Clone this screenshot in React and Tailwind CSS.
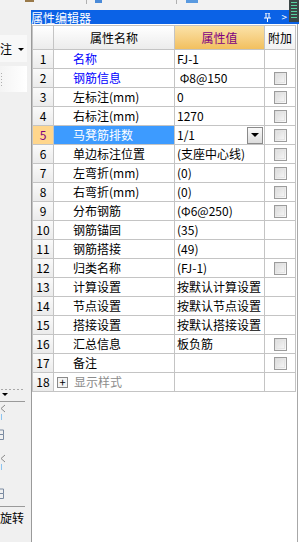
import React from 'react';

const ROWS = [
  { n: 1, name: '名称', value: 'FJ-1', blue: true },
  { n: 2, name: '钢筋信息', value: ' Φ8@150', blue: true, cb: true },
  { n: 3, name: '左标注(mm)', value: '0', cb: true },
  { n: 4, name: '右标注(mm)', value: '1270', cb: true },
  { n: 5, name: '马凳筋排数', value: '1/1', cb: true, selected: true },
  { n: 6, name: '单边标注位置', value: '(支座中心线)', cb: true },
  { n: 7, name: '左弯折(mm)', value: '(0)', cb: true },
  { n: 8, name: '右弯折(mm)', value: '(0)', cb: true },
  { n: 9, name: '分布钢筋', value: '(Φ6@250)', cb: true },
  { n: 10, name: '钢筋锚固', value: '(35)' },
  { n: 11, name: '钢筋搭接', value: '(49)' },
  { n: 12, name: '归类名称', value: '(FJ-1)', cb: true },
  { n: 13, name: '计算设置', value: '按默认计算设置' },
  { n: 14, name: '节点设置', value: '按默认节点设置' },
  { n: 15, name: '搭接设置', value: '按默认搭接设置' },
  { n: 16, name: '汇总信息', value: '板负筋', cb: true },
  { n: 17, name: '备注', value: '', cb: true },
  { n: 18, name: '显示样式', value: '', group: true },
];

function Check() {
  return (
    <div className="w-[13px] h-[13px] border border-[#9c9c9c] bg-gradient-to-br from-[#d8d8d8] to-[#fbfbfb] p-[1px]">
      <div className="w-full h-full border border-[#e4e4e4]" />
    </div>
  );
}

function Row({ r }) {
  const cell = 'h-[19px] border-r border-b border-[#c4c4c4] flex items-center';
  return (
    <>
      <div
        className={`${cell} justify-center ${
          r.selected
            ? 'bg-[#ffd68c] text-[#800080]'
            : 'bg-gradient-to-b from-[#fafafa] to-[#ebebeb] text-black'
        }`}
      >
        {r.n}
      </div>
      <div
        className={`${cell} ${r.group ? 'pl-[3px]' : 'pl-[19px]'} ${
          r.selected ? 'bg-[#3d9bff] text-white' : r.blue ? 'text-[#0000ff]' : 'text-black'
        }`}
      >
        {r.group && (
          <div className="w-[11px] h-[11px] border border-[#8a8a8a] bg-[#f4f4f4] flex items-center justify-center mr-[6px] text-[11px] leading-none text-black">
            +
          </div>
        )}
        <span className={r.group ? 'text-[#8c8c8c]' : ''}>{r.name}</span>
      </div>
      <div className={`${cell} pl-[2px] pr-[1px] whitespace-pre justify-between`}>
        <span>{r.value}</span>
        {r.selected && (
          <div className="w-[16px] h-[17px] border border-[#8a8a8a] bg-gradient-to-b from-[#fafafa] to-[#dcdcdc] flex items-center justify-center">
            <div className="w-0 h-0 border-l-[4px] border-r-[4px] border-t-[4px] border-l-transparent border-r-transparent border-t-black" />
          </div>
        )}
      </div>
      <div className={`${cell} justify-center pl-[1px]`}>{r.cb && <Check />}</div>
    </>
  );
}

// cut-off toolbar icons on the left edge
function SideIcons() {
  return (
    <svg width="6" height="96" viewBox="0 0 6 96" className="mt-[2px]">
      <path d="M5 1L1 4.5L5 8" stroke="#8a8a8a" fill="none" />
      <path d="M1.5 10v6" stroke="#8cc4f0" />
      <path d="M0 26h3.5v4.5H0M3.5 30.5v5H0" stroke="#7a8aa0" fill="none" />
      <path d="M5 51L1 54.5L5 58" stroke="#8a8a8a" fill="none" />
      <path d="M1.5 60v6" stroke="#8cc4f0" />
      <path d="M0 85h3.5v4.5H0M3.5 89.5v5H0" stroke="#7a8aa0" fill="none" />
    </svg>
  );
}

export default function App() {
  return (
    <div
      className="relative w-[299px] h-[542px] bg-white flex flex-col overflow-hidden text-[12px] leading-none"
      style={{ fontFamily: '"Noto Sans CJK SC", "Liberation Sans", sans-serif' }}
    >
      {/* toolbar remnants */}
      <div className="h-[10px] bg-[#f2f2f2] flex items-start">
        <div className="ml-[25px] w-[9px] h-[2px] bg-[#9a7a4a]" />
        <div className="ml-[52px] w-[1px] h-[4px] bg-[#b0b0b0]" />
        <div className="ml-[8px] w-[7px] h-[3px] bg-[#4a8ad8]" />
        <div className="ml-[74px] w-[1px] h-[4px] bg-[#b0b0b0]" />
        <div className="ml-[9px] w-[12px] h-[3px] bg-[#5a9ae0]" />
      </div>

      <div className="flex flex-1">
        {/* left side panel */}
        <div className="w-[31px] bg-[#f0f0f0] flex flex-col">
          <div className="h-[24px]" />
          <div className="mt-[1px] h-[27px] w-[27px] bg-[#f8f8f8] flex items-center pt-[1px]">
            <span className="text-[12px]">注</span>
            <div className="ml-[6px] w-0 h-0 border-l-[3px] border-r-[3px] border-t-[3px] border-l-transparent border-r-transparent border-t-black" />
          </div>
          <div className="mt-[4px] h-[26px] w-[27px] bg-gradient-to-r from-[#f4f4f4] to-white flex flex-col justify-center gap-[2px] pl-[1px]">
            <div className="w-[1px] h-[1px] bg-[#b0b0b0]" />
            <div className="w-[1px] h-[1px] bg-[#b0b0b0]" />
            <div className="w-[1px] h-[1px] bg-[#b0b0b0]" />
            <div className="w-[1px] h-[1px] bg-[#b0b0b0]" />
            <div className="w-[1px] h-[1px] bg-[#b0b0b0]" />
          </div>
          <div className="flex-1" />
          <div className="flex gap-[2px] pl-[1px] mb-[3px]">
            <div className="w-[2px] h-[1px] bg-[#a8a8a8]" />
            <div className="w-[2px] h-[1px] bg-[#a8a8a8]" />
            <div className="w-[2px] h-[1px] bg-[#a8a8a8]" />
            <div className="w-[2px] h-[1px] bg-[#a8a8a8]" />
            <div className="w-[2px] h-[1px] bg-[#a8a8a8]" />
            <div className="w-[2px] h-[1px] bg-[#a8a8a8]" />
          </div>
          <div className="ml-[2px] w-0 h-0 border-l-[3px] border-r-[3px] border-t-[3px] border-l-transparent border-r-transparent border-t-black" />
          <div className="mt-[5px] w-[25px] h-[1px] bg-[#9a9a9a]" />
          <SideIcons />
          <div className="mt-[6px] w-[25px] h-[1px] bg-[#9a9a9a]" />
          <div className="mt-[5px] text-[12px] text-black">旋转</div>
          <div className="h-[18px]" />
        </div>

        {/* property editor */}
        <div className="flex-1 flex flex-col">
          <div className="h-[14px] bg-[#0b62e6] text-white flex items-center justify-between pr-[12px]">
            <span className="pt-[1px]">属性编辑器</span>
            <div className="flex items-center gap-[10px]">
              <svg width="7" height="9" viewBox="0 0 7 9">
                <path d="M1 0h5M2 0v5M5 0v5M0 5h7M3.5 5v4" stroke="white" strokeWidth="1" fill="none" />
              </svg>
              <span className="text-[10px]">&gt;</span>
            </div>
          </div>
          <div className="flex-1 flex border-l border-[#9a9a9a]">
            <div className="w-[264px] pt-[1px]">
              <div className="grid grid-cols-[21px_121px_90px_31px] border-l border-t border-[#c4c4c4]">
                <div className="h-[24px] border-r border-b border-[#c4c4c4] bg-gradient-to-b from-white to-[#ececec]" />
                <div className="h-[24px] border-r border-b border-[#c4c4c4] bg-gradient-to-b from-white to-[#ececec] flex items-center justify-center">
                  属性名称
                </div>
                <div className="h-[24px] border-r border-b border-[#c4c4c4] bg-gradient-to-b from-[#fbe2a8] to-[#f2c05e] flex items-center justify-center text-[#800080]">
                  属性值
                </div>
                <div className="h-[24px] border-r border-b border-[#c4c4c4] bg-gradient-to-b from-white to-[#f2f2f2] flex items-center justify-center">
                  附加
                </div>
                {ROWS.map((r) => (
                  <Row key={r.n} r={r} />
                ))}
              </div>
            </div>
            <div className="w-[1px] bg-white" />
            <div className="w-[1px] bg-[#a8a8a8]" />
            <div className="flex-1 bg-white" />
          </div>
        </div>
      </div>

      {/* docked scroll grip, top right */}
      <div className="absolute top-0 right-0 w-[10px] h-[22px] bg-[#3c4646] flex flex-col gap-[2px] pt-[2px] pl-[2px]">
        <div className="w-[6px] h-[1px] bg-[#58d0a0]" />
        <div className="w-[6px] h-[1px] bg-[#58d0a0]" />
        <div className="w-[6px] h-[1px] bg-[#58d0a0]" />
        <div className="w-[6px] h-[1px] bg-[#58d0a0]" />
        <div className="w-[6px] h-[1px] bg-[#58d0a0]" />
        <div className="w-[6px] h-[1px] bg-[#58d0a0]" />
      </div>
    </div>
  );
}
